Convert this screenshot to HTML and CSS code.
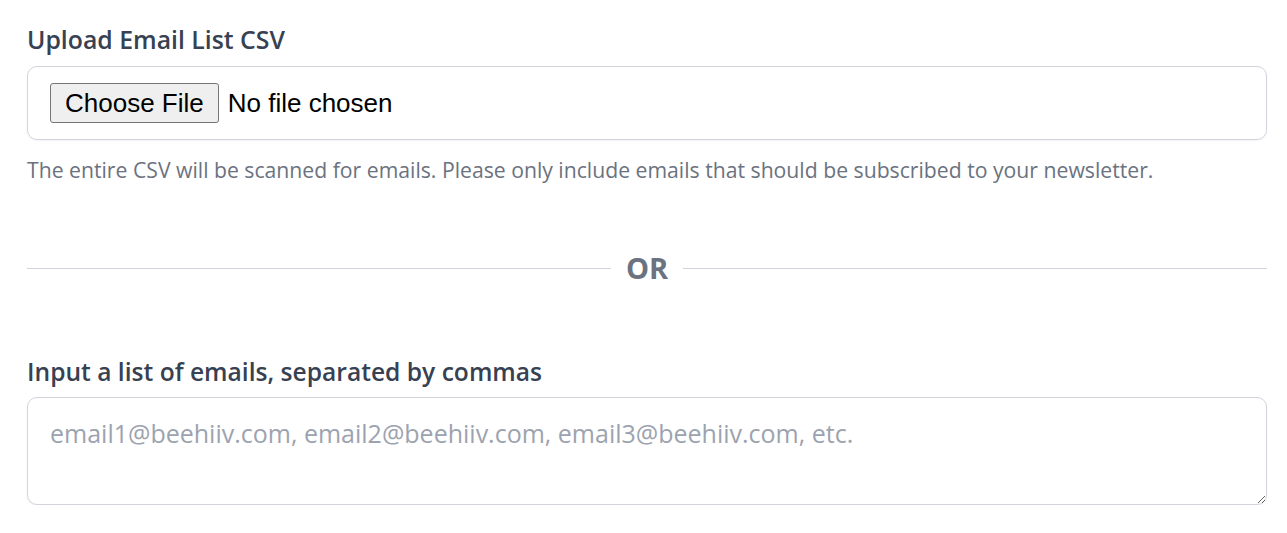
FILE: index.html
```html
<!DOCTYPE html>
<html>
<head>
<meta charset="utf-8">
<link rel="stylesheet" href="styles.css">
</head>
<body>
<div class="page">
  <section class="field">
    <label class="label">Upload Email List CSV</label>
    <div class="file-box">
      <span class="file-btn">Choose File</span>
      <span class="file-name">No file chosen</span>
    </div>
    <p class="help">The entire CSV will be scanned for emails. Please only include emails that should be subscribed to your newsletter.</p>
  </section>
  <div class="divider">
    <span class="line"></span>
    <span class="or">OR</span>
    <span class="line"></span>
  </div>
  <section class="field field-2">
    <label class="label">Input a list of emails, separated by commas</label>
    <textarea class="area" placeholder="email1@beehiiv.com, email2@beehiiv.com, email3@beehiiv.com, etc."></textarea>
  </section>
</div>
</body>
</html>
```
FILE: styles.css
```css
html, body { margin: 0; padding: 0; background: #fff; }
body { font-family: "Open Sans", "Noto Sans", sans-serif; }
.page { padding: 23px 20px 0 27px; display: flex; flex-direction: column; }
.field { display: flex; flex-direction: column; }
.label { font-size: 24.8px; font-weight: 600; color: #374151; line-height: 32px; margin-bottom: 11px; }
.file-box {
  border: 1px solid #d1d5db; border-radius: 10px; height: 72px;
  box-shadow: 0 1px 2px rgba(0,0,0,0.05);
  display: flex; align-items: center; padding-left: 22px; box-sizing: content-box;
}
.file-btn {
  font-family: "Liberation Sans", Arial, sans-serif; font-size: 26px; color: #000;
  background: #efefef; border: 1px solid #767676; border-radius: 3px;
  height: 38px; line-height: 38px; padding: 0 14px; margin-right: 9px;
}
.file-name { font-family: "Liberation Sans", Arial, sans-serif; font-size: 26px; color: #000; }
.help { margin: 15.5px 0 0; font-size: 21.2px; color: #6b7280; line-height: 28px; }
.divider { display: flex; align-items: center; margin-top: 64.5px; height: 40px; }
.line { flex: 1; height: 1px; background: #d1d5db; }
.or { font-size: 29px; font-weight: 700; color: #6b7280; padding: 0 15px; line-height: 40px; }
.field-2 { margin-top: 67.5px; }
.field-2 .label { font-size: 24.6px; margin-bottom: 9.5px; }
.area {
  height: 108px; box-sizing: border-box; resize: vertical;
  border: 1px solid #d1d5db; border-radius: 10px; box-shadow: 0 1px 2px rgba(0,0,0,0.05);
  font-family: "Open Sans", sans-serif; font-size: 25px; padding: 18px 22px; color: #111827;
  outline: none;
}
.area::placeholder { color: #9ca3af; }
```
